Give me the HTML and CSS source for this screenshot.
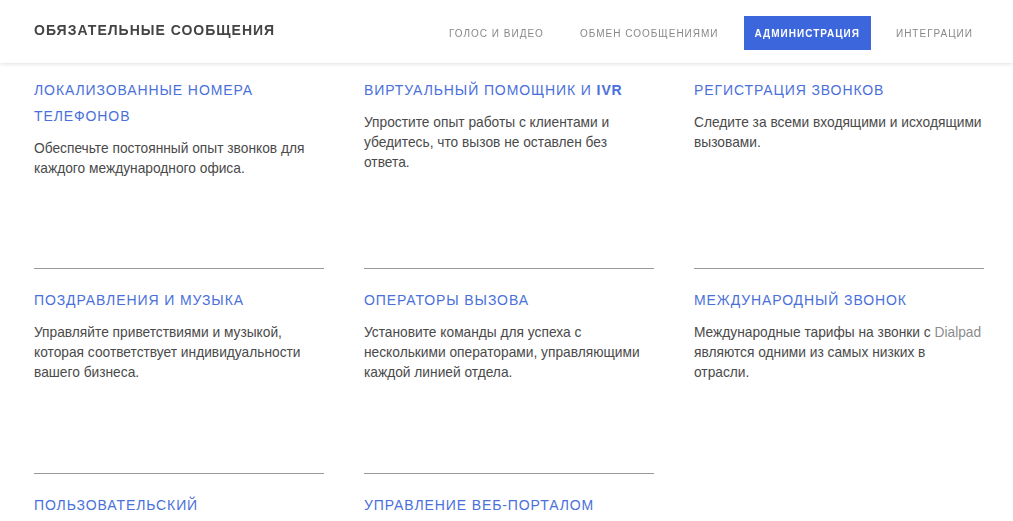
FILE: index.html
```html
<!DOCTYPE html>
<html lang="ru">
<head>
<meta charset="utf-8">
<title>Обязательные сообщения</title>
<link rel="stylesheet" href="styles.css">
</head>
<body>
<header class="topbar">
  <div class="brand">ОБЯЗАТЕЛЬНЫЕ СООБЩЕНИЯ</div>
  <nav class="nav">
    <a class="nav-item">ГОЛОС И ВИДЕО</a>
    <a class="nav-item">ОБМЕН СООБЩЕНИЯМИ</a>
    <a class="nav-item active">АДМИНИСТРАЦИЯ</a>
    <a class="nav-item">ИНТЕГРАЦИИ</a>
  </nav>
</header>
<main class="features">
  <section class="card">
    <h3 class="card-title">ЛОКАЛИЗОВАННЫЕ НОМЕРА ТЕЛЕФОНОВ</h3>
    <p class="card-text">Обеспечьте постоянный опыт звонков для<br>каждого международного офиса.</p>
  </section>
  <section class="card">
    <h3 class="card-title">ВИРТУАЛЬНЫЙ ПОМОЩНИК И <b>IVR</b></h3>
    <p class="card-text">Упростите опыт работы с клиентами и<br>убедитесь, что вызов не оставлен без<br>ответа.</p>
  </section>
  <section class="card">
    <h3 class="card-title">РЕГИСТРАЦИЯ ЗВОНКОВ</h3>
    <p class="card-text">Следите за всеми входящими и исходящими<br>вызовами.</p>
  </section>
  <section class="card">
    <h3 class="card-title">ПОЗДРАВЛЕНИЯ И МУЗЫКА</h3>
    <p class="card-text">Управляйте приветствиями и музыкой,<br>которая соответствует индивидуальности<br>вашего бизнеса.</p>
  </section>
  <section class="card">
    <h3 class="card-title">ОПЕРАТОРЫ ВЫЗОВА</h3>
    <p class="card-text">Установите команды для успеха с<br>несколькими операторами, управляющими<br>каждой линией отдела.</p>
  </section>
  <section class="card">
    <h3 class="card-title">МЕЖДУНАРОДНЫЙ ЗВОНОК</h3>
    <p class="card-text">Международные тарифы на звонки с <span class="brand-word">Dialpad</span><br>являются одними из самых низких в<br>отрасли.</p>
  </section>
  <section class="card">
    <h3 class="card-title">ПОЛЬЗОВАТЕЛЬСКИЙ</h3>
  </section>
  <section class="card">
    <h3 class="card-title">УПРАВЛЕНИЕ ВЕБ-ПОРТАЛОМ</h3>
  </section>
</main>
</body>
</html>
```

FILE: styles.css
```css
html, body {
  margin: 0;
  padding: 0;
  background: #ffffff;
  font-family: "Liberation Sans", Arial, sans-serif;
  overflow: hidden;
}

.topbar {
  position: fixed;
  top: 0;
  left: 0;
  right: 0;
  height: 63px;
  z-index: 10;
  background: #ffffff;
  box-shadow: 0 1px 4px rgba(0, 0, 0, 0.12);
  display: flex;
  justify-content: space-between;
  align-items: flex-start;
  padding: 0 29px 0 34px;
}

.brand {
  margin-top: 22px;
  font-size: 14px;
  font-weight: bold;
  letter-spacing: 1px;
  color: #444444;
  line-height: 16px;
}

.nav {
  display: flex;
  gap: 14px;
  margin-top: 16px;
}

.nav-item {
  display: block;
  height: 34px;
  line-height: 35px;
  padding: 0 11px;
  font-size: 10px;
  letter-spacing: 1px;
  color: #888888;
  text-decoration: none;
}

.nav-item.active {
  background: #3c66dc;
  color: #ffffff;
  font-weight: bold;
}

.features {
  display: grid;
  grid-template-columns: repeat(3, 290px);
  grid-template-rows: 210px 205px 205px;
  column-gap: 40px;
  padding: 58px 0 0 34px;
}

.card {
  border-top: 1px solid #9a9a9a;
  padding-top: 18px;
  box-sizing: border-box;
}

.card-title {
  margin: 0;
  font-size: 14px;
  font-weight: normal;
  line-height: 26px;
  letter-spacing: 0.9px;
  color: #4a70db;
}

.card-title b {
  font-weight: bold;
}

.card-text {
  margin: 10px 0 0;
  font-size: 13.75px;
  line-height: 20px;
  color: #4a4a4a;
  white-space: nowrap;
}

.brand-word {
  color: #8c8c8c;
}
```
